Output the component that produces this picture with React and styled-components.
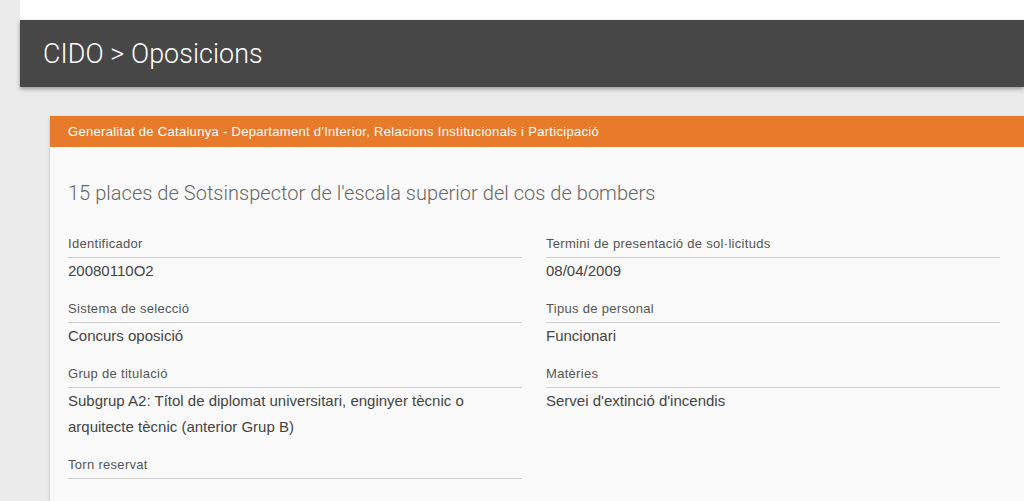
import * as React from "react"
import styled, {createGlobalStyle} from "styled-components"

const GlobalStyle = createGlobalStyle`
	html, body {
		margin: 0;
		padding: 0;
		background: #ebebeb;
		overflow: hidden;
	}
`

const Page = styled.div`
	padding-left: 20px;
	min-height: 501px;
`
const TopStrip = styled.div`
	height: 20px;
	background: #ffffff;
`
const Header = styled.header`
	height: 67px;
	background: #474747;
	display: flex;
	align-items: center;
	padding-left: 23px;
	box-shadow: 0 2px 4px rgba(0,0,0,0.35);
	position: relative;
	z-index: 1;
`
const HeaderTitle = styled.h1`
	margin: 0;
	font-family: Roboto, sans-serif;
	font-weight: 300;
	font-size: 26.8px;
	letter-spacing: 0.1px;
	color: #ffffff;
`
const Main = styled.main`
	padding: 29px 0 0 30px;
`
const Card = styled.section`
	background: #fafafa;
	box-shadow: 0 1px 3px rgba(0,0,0,0.2);
`
const CardBar = styled.div`
	height: 31px;
	background: #e77b2b;
	display: flex;
	align-items: center;
	padding-left: 18px;
	font-family: "Liberation Sans", Arial, sans-serif;
	font-size: 13px;
	letter-spacing: 0.3px;
	color: #ffffff;
`
const CardBody = styled.div`
	padding: 32px 24px 60px 18px;
`
const Title = styled.h2`
	margin: 0 0 28px;
	font-family: Roboto, sans-serif;
	font-weight: 300;
	font-size: 20px;
	letter-spacing: 0.03px;
	line-height: 28px;
	color: #666666;
`
const Fields = styled.div`
	display: grid;
	grid-template-columns: 1fr 1fr;
	column-gap: 24px;
	row-gap: 16px;
`
const Field = styled.div`
	display: flex;
	flex-direction: column;
`
const Label = styled.div`
	font-family: "Liberation Sans", Arial, sans-serif;
	font-size: 13px;
	letter-spacing: 0.3px;
	line-height: 18px;
	color: #555555;
	padding-bottom: 4px;
	border-bottom: 1px solid #cfcfcf;
`
const Value = styled.div`
	font-family: "Liberation Sans", Arial, sans-serif;
	font-size: 15px;
	line-height: 26px;
	color: #444444;
	min-height: ${p => (p.$empty ? "0" : "26px")};
`

const fields = [
	["Identificador", "20080110O2"],
	["Termini de presentació de sol·licituds", "08/04/2009"],
	["Sistema de selecció", "Concurs oposició"],
	["Tipus de personal", "Funcionari"],
	["Grup de titulació", "Subgrup A2: Títol de diplomat universitari, enginyer tècnic o arquitecte tècnic (anterior Grup B)"],
	["Matèries", "Servei d'extinció d'incendis"],
	["Torn reservat", ""],
]

const App = () => {
	return (
		<>
			<GlobalStyle />
			<Page>
				<TopStrip />
				<Header>
					<HeaderTitle>CIDO &gt; Oposicions</HeaderTitle>
				</Header>
				<Main>
					<Card>
						<CardBar>Generalitat de Catalunya - Departament d'Interior, Relacions Institucionals i Participació</CardBar>
						<CardBody>
							<Title>15 places de Sotsinspector de l'escala superior del cos de bombers</Title>
							<Fields>
								{fields.map(([label, value]) => (
									<Field key={label}>
										<Label>{label}</Label>
										<Value $empty={!value}>{value}</Value>
									</Field>
								))}
							</Fields>
						</CardBody>
					</Card>
				</Main>
			</Page>
		</>
	)
}
export default App
